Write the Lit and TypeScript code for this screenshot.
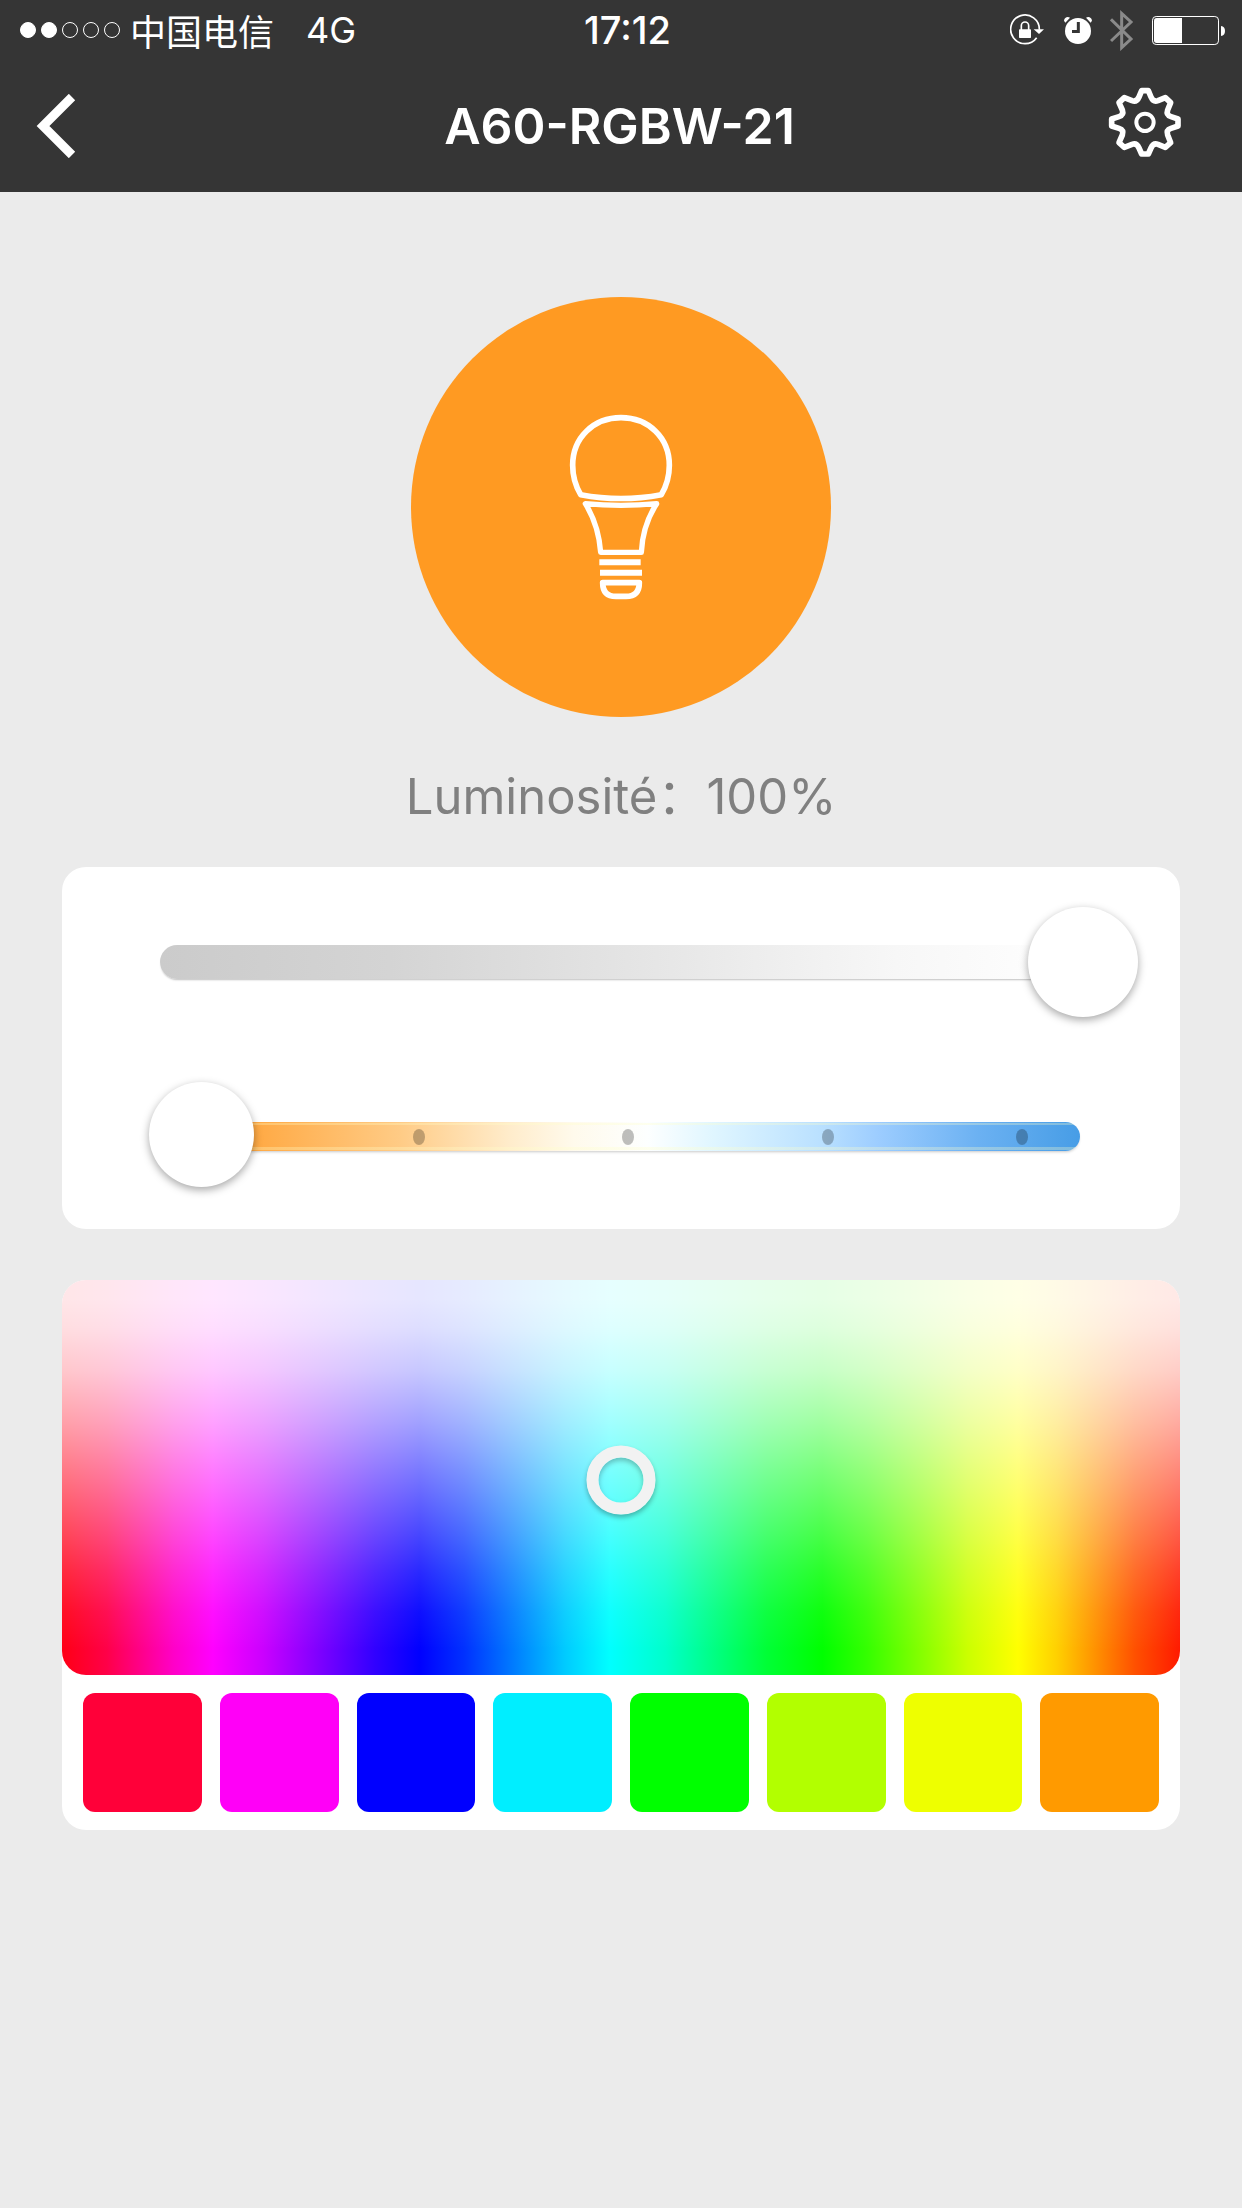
import { LitElement, html, css, svg } from "lit";
import { customElement, state, property } from "lit/decorators.js";
import { styleMap } from "lit/directives/style-map.js";

const FONT = css`Inter, "Noto Sans CJK SC", "Liberation Sans", sans-serif`;

@customElement("status-bar")
class StatusBar extends LitElement {
  @property({ type: Number }) signal = 2;

  static styles = css`
    :host {
      display: block;
    }
    .bar {
      display: grid;
      grid-template-columns: 1fr auto 1fr;
      align-items: center;
      height: 60px;
      padding: 0 17px 0 20px;
      color: #fff;
      font: 400 36px/60px ${FONT};
    }
    .left {
      display: flex;
      align-items: center;
    }
    .signal {
      display: flex;
      gap: 5px;
      margin-right: 10px;
    }
    .dot {
      box-sizing: border-box;
      width: 16px;
      height: 16px;
      border: 1px solid #fff;
      border-radius: 50%;
    }
    .dot.on {
      background: #fff;
    }
    .carrier {
      font-family: "Noto Sans CJK SC", sans-serif;
      margin-right: 32px;
    }
    .time {
      padding-left: 10px;
      font-size: 38px;
      font-weight: 500;
    }
    .icons {
      display: flex;
      justify-content: flex-end;
      gap: 18px;
    }
    .icons svg {
      display: block;
      height: 42px;
    }
  `;

  render() {
    return html`
      <div class="bar">
        <div class="left">
          <div class="signal" role="img" aria-label="Signal">
            ${[0, 1, 2, 3, 4].map((i) => html`<span class="dot ${i < this.signal ? "on" : ""}"></span>`)}
          </div>
          <span class="carrier">中国电信</span>
          <span>4G</span>
        </div>
        <span class="time">17:12</span>
        <div class="icons">
          <svg width="36" viewBox="150 27 108 126" fill="none" stroke="#fff" aria-hidden="true">
            <path d="M238 89A43 43 0 1 0 230 113" stroke-width="5" />
            <path d="M221 88H252L237 102Z" fill="#fff" stroke="none" />
            <rect x="177" y="88" width="36" height="26" rx="2" fill="#fff" stroke="none" />
            <path d="M184 90V77a11 11 0 0 1 22 0V90" stroke-width="5" />
          </svg>
          <svg width="28" viewBox="312 27 84 126" fill="#fff" aria-hidden="true">
            <circle cx="354" cy="93" r="39" />
            <path d="M316 68Q309 60 316 54Q322 49 330 53Z" />
            <path d="M392 68Q399 60 392 54Q386 49 378 53Z" />
            <path d="M355 66V94.500H336" fill="none" stroke="#353535" stroke-width="9" />
          </svg>
          <svg width="24" viewBox="450 27 72 126" fill="none" stroke="#8a8a8a" stroke-width="9" aria-hidden="true">
            <path d="M453 58L513 117L485 143V40L513 66L453 123" />
          </svg>
          <svg width="73" viewBox="576 27 219 126" fill="#fff" aria-hidden="true">
            <rect x="577.500" y="49.500" width="198" height="84" rx="11" fill="none" stroke="#fff" stroke-width="3" />
            <path d="M590 54H666V129H590Q582 129 582 121V62Q582 54 590 54Z" />
            <path d="M783 78Q795 80 795 93Q795 106 783 108Z" />
          </svg>
        </div>
      </div>
    `;
  }
}

@customElement("nav-bar")
class NavBar extends LitElement {
  @property() heading = "";

  static styles = css`
    :host {
      display: block;
    }
    .bar {
      display: grid;
      grid-template-columns: 1fr auto 1fr;
      align-items: center;
      height: 132px;
      padding: 0 59px 0 36px;
    }
    .title {
      margin: 0;
      padding-left: 20px;
      color: #fff;
      font: 600 50px/60px ${FONT};
    }
    .action {
      display: block;
      justify-self: start;
      margin: 0;
      padding: 0;
      border: 0;
      background: none;
      cursor: pointer;
    }
    .action.end {
      justify-self: end;
      padding-bottom: 8px;
    }
    .action svg {
      display: block;
    }
  `;

  render() {
    return html`
      <div class="bar">
        <button class="action" aria-label="Retour">
          <svg width="40" height="64" viewBox="0 0 40 64" fill="none" stroke="#fff" stroke-width="9">
            <path d="M36 3L7 32L36 61" />
          </svg>
        </button>
        <h1 class="title">${this.heading}</h1>
        <button class="action end" aria-label="Réglages">
          <svg width="76" height="73" viewBox="440 258 228 219" fill="none" stroke="#fff" stroke-linejoin="round">
            <path
              stroke-width="17"
              d="M544 272H564L572 291Q579 307 593 302L615 293L631 308L622 330Q617 345 632 350L653 357V378L632 385Q617 390 622 405L631 428L615 442L593 433Q579 428 572 444L564 462H544L536 444Q529 428 515 433L492 442L476 428L486 405Q491 390 476 385L454 378V357L476 350Q491 345 486 330L476 308L492 293L515 302Q529 307 536 291Z"
            />
            <circle cx="554" cy="367" r="26" stroke-width="12" />
          </svg>
        </button>
      </div>
    `;
  }
}

@customElement("light-sliders")
class LightSliders extends LitElement {
  @property({ type: Number }) brightness = 100;
  @state() private temperature = 0;

  private readonly steps = [28.2, 50.9, 72.6, 93.7];

  static styles = css`
    :host {
      display: block;
    }
    .card {
      display: grid;
      gap: 65px;
      padding: 40px 0 42px;
      border-radius: 24px;
      background: #fff;
    }
    .row {
      display: grid;
      align-items: center;
    }
    .track {
      grid-area: 1 / 1;
      position: relative;
      margin: 0 100px 0 98px;
      border-radius: 17px;
    }
    .track.level {
      height: 34px;
      background: linear-gradient(90deg, #cbcbcb, #d4d4d4 25%, #e6e6e6 54%, #f7f7f7 80%, #fff);
      box-shadow: 0 2px 2px -1px rgba(0, 0, 0, 0.25);
    }
    .track.tone {
      height: 29px;
      margin-top: 4px;
      background:
        linear-gradient(transparent 0 1px, rgba(255, 255, 200, 0.3) 1px 3px, transparent 3px 25px, rgba(255, 255, 200, 0.3) 25px 28px, transparent 28px),
        linear-gradient(90deg, #ff9a22, #ffab47 11%, #ffcb85 26%, #ffeccb 38%, #fffaec 45%, #fdffff 53%, #e0f6ff 60%, #b9e0ff 72%, #9dcdff 78%, #6bb1f2 89%, #479de6);
      box-shadow: 0 2px 3px -1px rgba(0, 0, 0, 0.22);
    }
    .step {
      position: absolute;
      top: 50%;
      width: 12px;
      height: 16px;
      border-radius: 50%;
      background: rgba(0, 0, 0, 0.25);
      transform: translate(-50%, -50%);
    }
    .range {
      grid-area: 1 / 1;
      position: relative;
      appearance: none;
      margin: 0 42px;
      background: none;
      cursor: pointer;
    }
    .range.tone {
      margin: 0 100px 0 87px;
    }
    .range::-webkit-slider-thumb {
      appearance: none;
      width: 110px;
      height: 110px;
      border-radius: 50%;
      background: #fff;
      box-shadow: 0 3px 8px rgba(0, 0, 0, 0.35);
    }
    .range.tone::-webkit-slider-thumb {
      width: 105px;
      height: 105px;
    }
  `;

  private onBrightness(e: Event) {
    const value = Number((e.target as HTMLInputElement).value);
    this.dispatchEvent(new CustomEvent("brightness", { detail: value }));
  }

  render() {
    return html`
      <section class="card">
        <div class="row">
          <div class="track level"></div>
          <input
            class="range"
            type="range"
            min="0"
            max="100"
            aria-label="Luminosité"
            .value=${String(this.brightness)}
            @input=${this.onBrightness}
          />
        </div>
        <div class="row">
          <div class="track tone">
            ${this.steps.map((s) => html`<span class="step" style=${styleMap({ left: `${s}%` })}></span>`)}
          </div>
          <input
            class="range tone"
            type="range"
            min="0"
            max="4"
            aria-label="Température de couleur"
            .value=${String(this.temperature)}
            @input=${(e: Event) => (this.temperature = Number((e.target as HTMLInputElement).value))}
          />
        </div>
      </section>
    `;
  }
}

@customElement("color-picker")
class ColorPicker extends LitElement {
  @state() private x = 50;
  @state() private y = 50.7;

  private readonly presets = [
    { name: "Rouge", color: "#ff0039" },
    { name: "Magenta", color: "#ff00f7" },
    { name: "Bleu", color: "#0000ff" },
    { name: "Cyan", color: "#00eeff" },
    { name: "Vert", color: "#00ff00" },
    { name: "Citron vert", color: "#b2ff00" },
    { name: "Jaune", color: "#eeff00" },
    { name: "Orange", color: "#ff9a00" },
  ];

  static styles = css`
    :host {
      display: block;
    }
    .card {
      border-radius: 24px;
      background: #fff;
    }
    /* Extra stops near the quarter points round off the peak of each hue. */
    .pad {
      position: relative;
      height: 395px;
      border-radius: 24px;
      background:
        linear-gradient(
          rgba(255, 255, 255, 0.9) 5%,
          rgba(255, 255, 255, 0.87) 12%,
          rgba(255, 255, 255, 0.78) 23%,
          rgba(255, 255, 255, 0.63) 36%,
          rgba(255, 255, 255, 0.48) 48%,
          rgba(255, 255, 255, 0.37) 57%,
          rgba(255, 255, 255, 0.16) 74%,
          rgba(255, 255, 255, 0.06) 84%,
          rgba(255, 255, 255, 0) 94%
        ),
        linear-gradient(
          90deg,
          #ff0015,
          #ff0048 4%,
          #ff00c8 10%,
          #ff00ff 13.5%,
          #cb00ff 18%,
          #3100ff 28%,
          #0000ff 32%,
          #0031ff 36%,
          #00cbff 45%,
          #00ffff 49%,
          #00ffcb 54%,
          #00ff36 63%,
          #00ff00 68%,
          #34ff00 72%,
          #cbff00 81%,
          #ffff00 85.5%,
          #ffd000 89%,
          #ff5000 96%,
          #ff1a00
        );
      cursor: crosshair;
    }
    .marker {
      position: absolute;
      box-sizing: border-box;
      width: 69px;
      height: 69px;
      padding: 0;
      border: 12px solid #f2f2f2;
      border-radius: 50%;
      background: none;
      box-shadow: 0 3px 5px rgba(0, 0, 0, 0.3), inset 0 3px 5px rgba(0, 0, 0, 0.25);
      transform: translate(-50%, -50%);
    }
    .presets {
      display: grid;
      grid-template-columns: repeat(8, 1fr);
      gap: 18px;
      padding: 18px 21px;
    }
    .preset {
      aspect-ratio: 1;
      padding: 0;
      border: 0;
      border-radius: 12px;
      cursor: pointer;
    }
  `;

  private pick(e: MouseEvent) {
    const box = (e.currentTarget as HTMLElement).getBoundingClientRect();
    this.x = ((e.clientX - box.left) / box.width) * 100;
    this.y = ((e.clientY - box.top) / box.height) * 100;
  }

  render() {
    return html`
      <section class="card">
        <div class="pad" @click=${this.pick}>
          <button
            class="marker"
            aria-label="Couleur choisie"
            style=${styleMap({ left: `${this.x}%`, top: `${this.y}%` })}
          ></button>
        </div>
        <div class="presets">
          ${this.presets.map(
            (p) => html`<button class="preset" aria-label=${p.name} style=${styleMap({ background: p.color })}></button>`,
          )}
        </div>
      </section>
    `;
  }
}

@customElement("app-root")
class AppRoot extends LitElement {
  @state() private brightness = 100;

  static styles = css`
    :host {
      display: block;
      min-height: 100vh;
      background: #ebebeb;
      font-family: ${FONT};
    }
    .header {
      background: #353535;
    }
    .main {
      display: flex;
      flex-direction: column;
      padding: 105px 62px 60px;
    }
    .lamp {
      display: flex;
      align-items: center;
      justify-content: center;
      align-self: center;
      width: 420px;
      height: 420px;
      padding: 0;
      border: 0;
      border-radius: 50%;
      background: #ff9a22;
      cursor: pointer;
    }
    .level {
      margin: 50px 0 40px;
      color: #808080;
      font-size: 49px;
      line-height: 60px;
      text-align: center;
    }
    .picker {
      margin-top: 51px;
    }
  `;

  private lampIcon = svg`
    <path stroke-width="17" d="M122 314C104 284 98 256 98 226C98 142 162 83 243 83C324 83 388 142 388 226C388 256 382 284 364 314Q243 337 122 314Z" />
    <path stroke-width="16" d="M136 341Q243 351 350 341Q308 405 304 487H182Q176 405 136 341Z" />
    <path stroke-width="18" d="M178 516.500H302M180 548.500H306" />
    <path stroke-width="17" d="M188 578H298Q298 619 258 619H228Q188 619 188 578Z" />
  `;

  render() {
    return html`
      <header class="header">
        <status-bar></status-bar>
        <nav-bar heading="A60-RGBW-21"></nav-bar>
      </header>
      <main class="main">
        <button class="lamp" aria-label="Allumer ou éteindre">
          <svg width="106" height="190" viewBox="84 66 318 570" fill="none" stroke="#fff" stroke-linejoin="round">
            ${this.lampIcon}
          </svg>
        </button>
        <p class="level">Luminosité：${this.brightness}%</p>
        <light-sliders
          .brightness=${this.brightness}
          @brightness=${(e: CustomEvent) => (this.brightness = e.detail)}
        ></light-sliders>
        <color-picker class="picker"></color-picker>
      </main>
    `;
  }
}
